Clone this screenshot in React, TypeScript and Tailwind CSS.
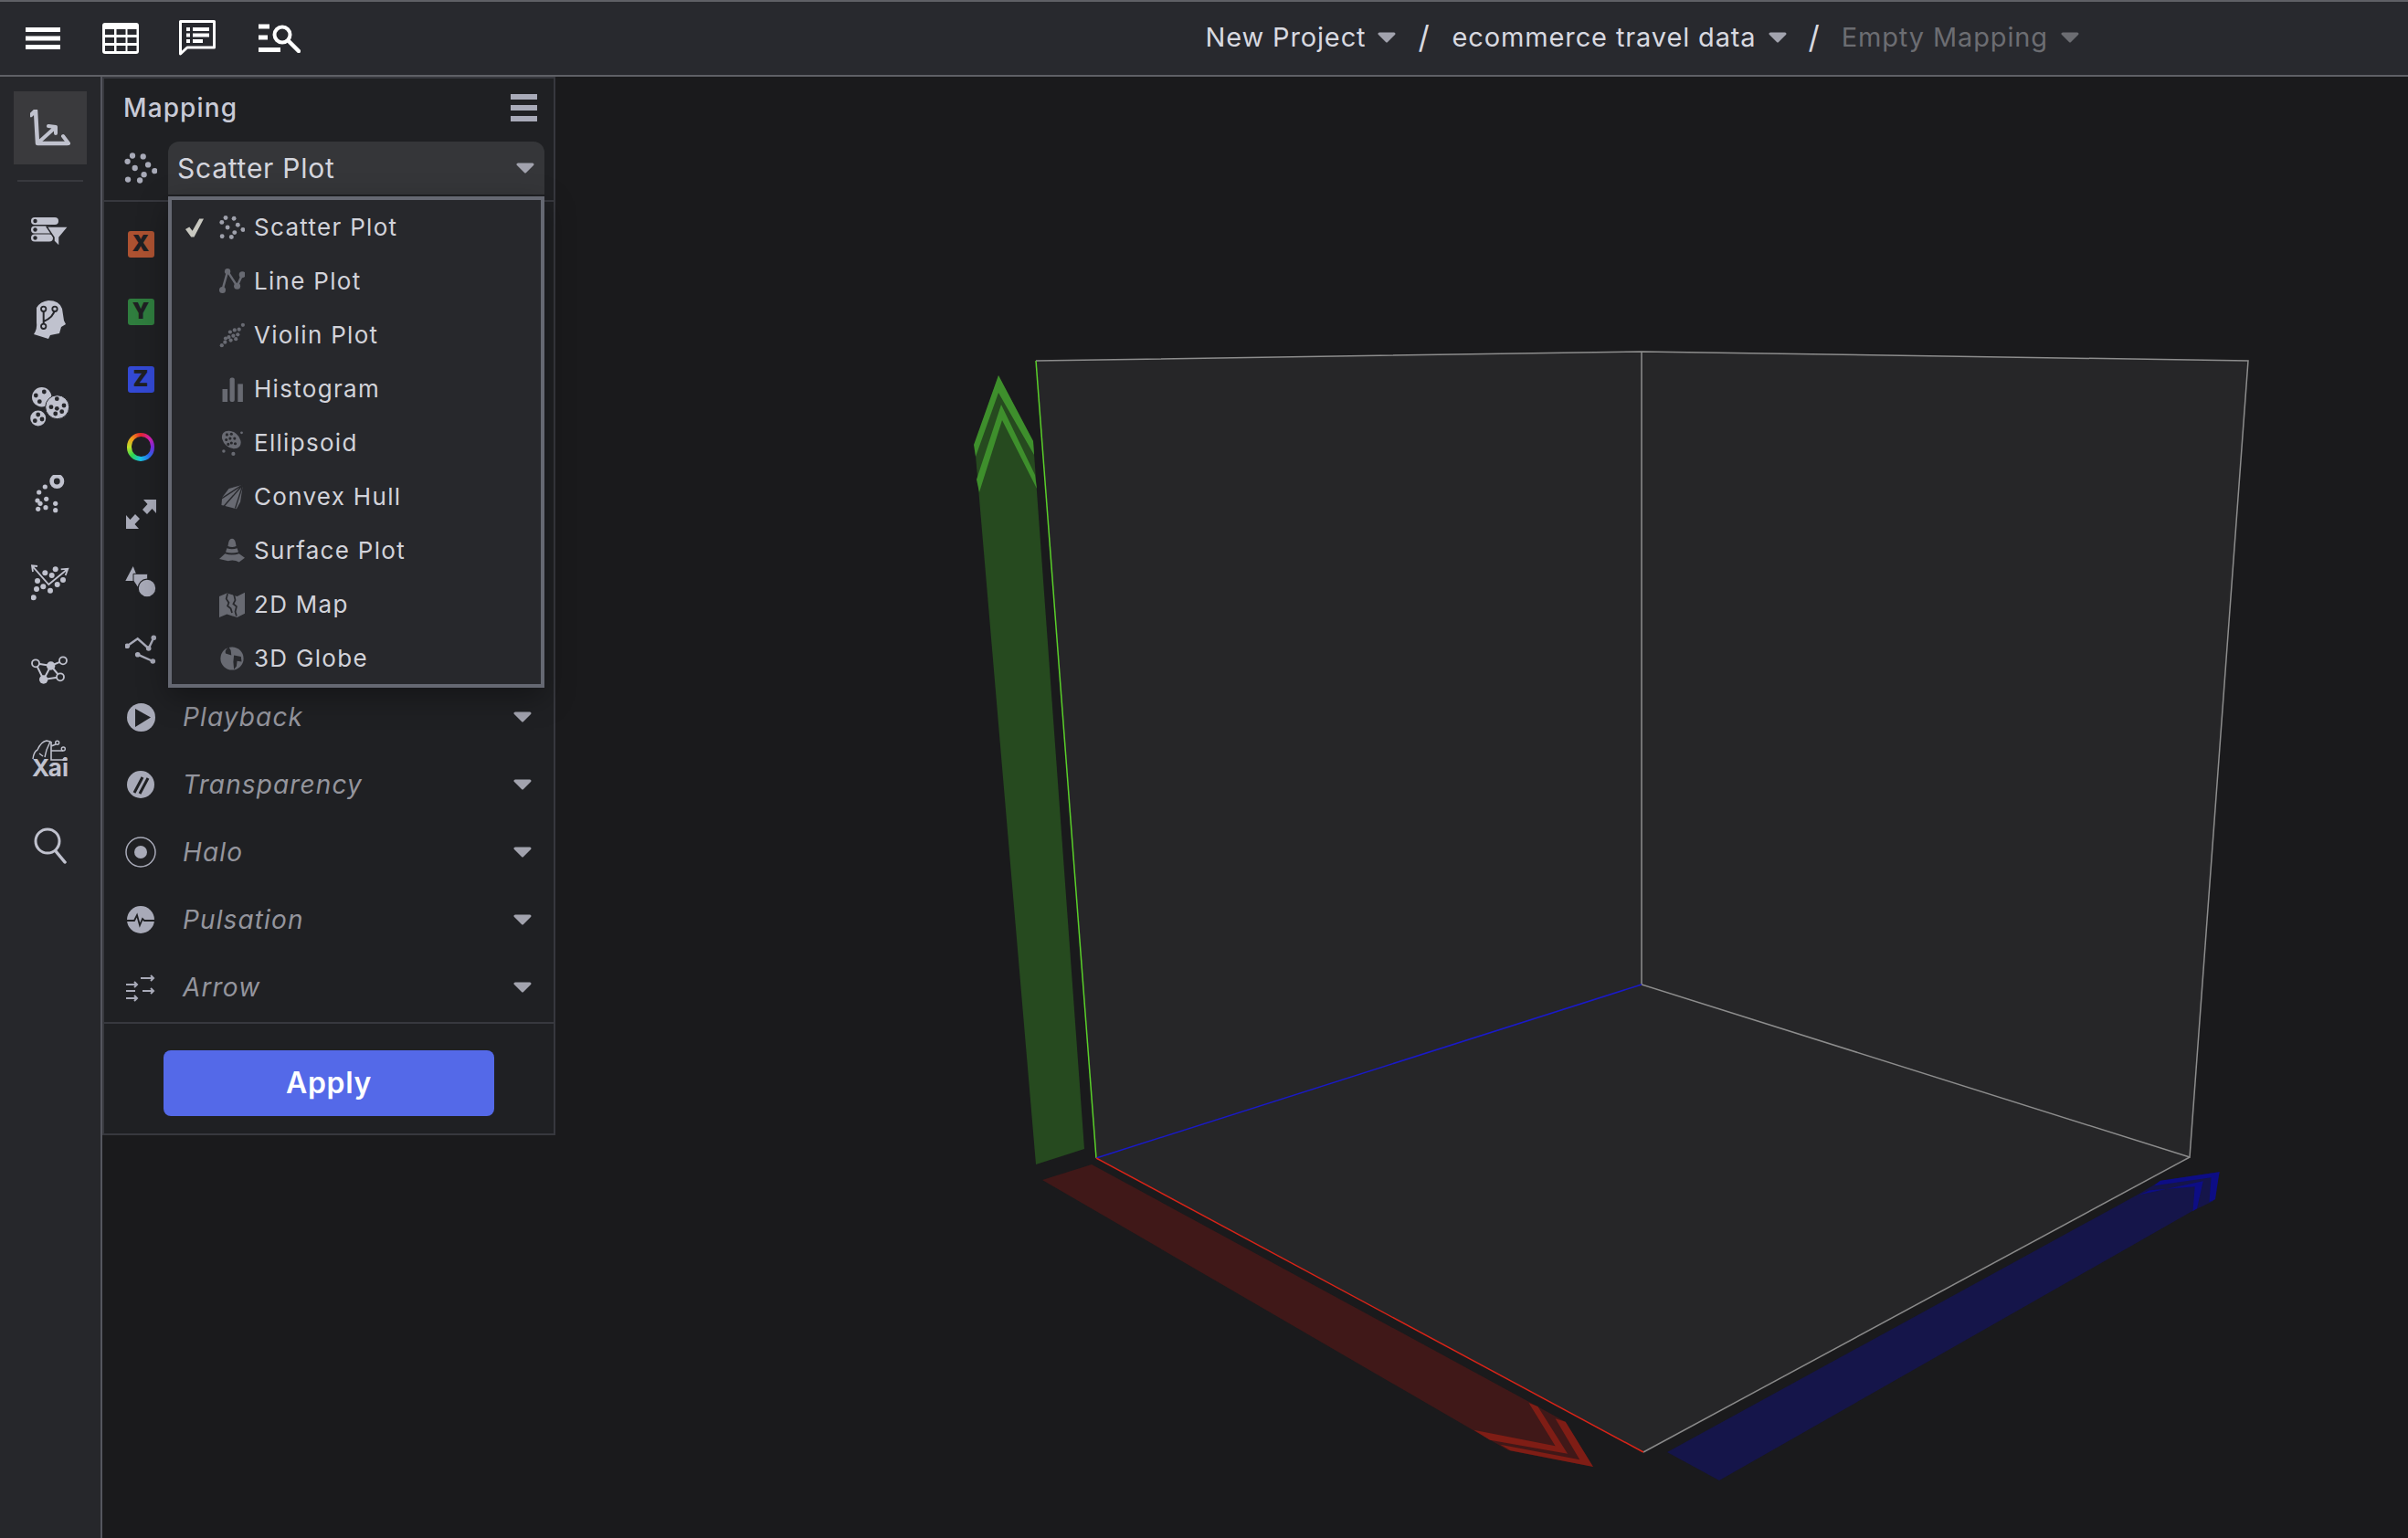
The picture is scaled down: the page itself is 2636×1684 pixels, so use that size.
import type { ReactNode } from 'react'

const font = '[font-family:Inter,"Liberation_Sans",sans-serif]'

function Caret({ className = 'fill-[#a2a3ae] stroke-[#a2a3ae]' }: { className?: string }) {
  return (
    <svg width="20" height="12" viewBox="0 0 20 12" className={className}>
      <path d="M2 2 H18 L10 10 Z" strokeWidth="3" strokeLinejoin="round" />
    </svg>
  )
}

function Dots({ pts, r = 7, className }: { pts: number[][]; r?: number; className: string }) {
  return (
    <svg viewBox="0 0 80 80" className={className}>
      {pts.map(([x, y], i) => (
        <circle key={i} cx={x} cy={y} r={r} fill="currentColor" />
      ))}
    </svg>
  )
}

const scatterPts = [[20, 10], [46, 12], [8, 24], [58, 32], [26, 40], [74, 47], [48, 56], [9, 68], [38, 70]]
const violinPts = [[74, 8], [62, 22], [48, 24], [34, 30], [58, 38], [44, 42], [30, 46], [20, 50], [52, 52], [36, 56], [18, 62], [8, 72]]

const menuIcon = 'w-[28px] h-[28px] text-[#686a72]'

function LineIcon() {
  return (
    <svg viewBox="0 0 80 80" className={menuIcon}>
      <polyline points="10,67 26,9 56,55 72,19" fill="none" stroke="currentColor" strokeWidth="7" />
      <circle cx="26" cy="9" r="9" fill="currentColor" />
      <circle cx="72" cy="19" r="10" fill="currentColor" />
      <circle cx="56" cy="55" r="10" fill="currentColor" />
      <circle cx="10" cy="67" r="10" fill="currentColor" />
    </svg>
  )
}

function HistogramIcon() {
  return (
    <svg viewBox="0 0 80 80" className={menuIcon}>
      <rect x="10" y="40" width="16" height="40" fill="currentColor" />
      <rect x="33" y="4" width="15" height="76" rx="6" fill="currentColor" />
      <rect x="58" y="24" width="16" height="56" fill="currentColor" />
    </svg>
  )
}

function EllipsoidIcon() {
  return (
    <svg viewBox="0 0 80 80" className={menuIcon}>
      <ellipse cx="38" cy="30" rx="33" ry="24" transform="rotate(40 38 30)" fill="currentColor" />
      {[[24, 14], [38, 12], [48, 26], [34, 26], [22, 30], [38, 40], [50, 42], [28, 44]].map(([x, y], i) => (
        <circle key={i} cx={x} cy={y} r="4.5" fill="#27282c" />
      ))}
      <circle cx="70" cy="8" r="4" fill="currentColor" />
      <circle cx="14" cy="66" r="5" fill="currentColor" />
      <circle cx="44" cy="74" r="6" fill="currentColor" />
    </svg>
  )
}

function HullIcon() {
  return (
    <svg viewBox="0 0 80 80" className={menuIcon}>
      <polygon points="74,2 30,14 9,42 7,66 54,78 66,56" fill="currentColor" />
      <path d="M74 2 L6 46 M74 2 L14 70 M74 2 L50 76" stroke="#27282c" strokeWidth="4" fill="none" />
    </svg>
  )
}

function SurfaceIcon() {
  return (
    <svg viewBox="0 0 80 80" className={menuIcon}>
      <path d="M27 26 Q29 2 40 2 Q51 2 53 26 Q40 31 27 26 Z" fill="currentColor" />
      <path d="M24 32 Q40 38 56 32 L60 44 Q40 50 20 44 Z" fill="currentColor" />
      <path d="M18 49 Q40 56 62 49 L80 62 L62 76 Q46 66 28 72 L0 66 Z" fill="currentColor" />
    </svg>
  )
}

function MapIcon() {
  return (
    <svg viewBox="0 0 80 80" className={menuIcon}>
      <path d="M0 14 L24 4 L56 14 L80 2 V68 L56 80 L24 70 L0 80 Z" fill="currentColor" />
      <path d="M26 6 L22 22 L30 34 L26 44 L36 52 L40 66 M46 8 L50 26 L44 38 L54 46 L50 62 L54 76" stroke="#27282c" strokeWidth="5" fill="none" />
    </svg>
  )
}

function GlobeIcon() {
  return (
    <svg viewBox="0 0 80 80" className={menuIcon}>
      <circle cx="40" cy="40" r="36" fill="currentColor" />
      <path d="M30 4 Q16 14 20 24 L38 30 L36 14 Z M46 30 L68 34 L70 50 L56 48 L54 64 L46 74 L44 50 Z" fill="#27282c" />
    </svg>
  )
}

const side = 'text-[#c0c2ce]'

function AxesIcon() {
  return (
    <svg width="44" height="40" viewBox="0 0 44 40" className={side}>
      <path d="M1 6 L6 1 L8 37 H41" fill="none" stroke="currentColor" strokeWidth="4.5" strokeLinejoin="round" strokeLinecap="round" />
      <path d="M8 37 L28 19 M20 18 L28 19 L28 26 M36 29 L42 37" fill="none" stroke="currentColor" strokeWidth="4" strokeLinecap="round" strokeLinejoin="round" />
    </svg>
  )
}

function FilterDbIcon() {
  return (
    <svg width="42" height="32" viewBox="0 0 42 32" className={side}>
      <rect x="0" y="0" width="30" height="8" rx="4" fill="currentColor" />
      <rect x="0" y="9.5" width="24" height="8" rx="4" fill="currentColor" />
      <rect x="0" y="18.5" width="24" height="8" rx="4" fill="currentColor" />
      <circle cx="4.5" cy="4" r="2.2" fill="#26272b" />
      <circle cx="4.5" cy="13.5" r="2.2" fill="#26272b" />
      <circle cx="4.5" cy="22.5" r="2.2" fill="#26272b" />
      <path d="M17 10 H41 L31 22 V32 L25 26 V22 Z" fill="currentColor" stroke="#26272b" strokeWidth="1.5" strokeLinejoin="round" />
    </svg>
  )
}

function BrainIcon() {
  return (
    <svg width="36" height="43" viewBox="-1 -1 36 43" className={side}>
      <path d="M2 7 Q6 0 15 -1 Q27 -1 30 8 L32 21 L34 25 L29 28 L27 35 L17 37 L15 41 L-1 36 Q3 30 2 23 Z" fill="currentColor" />
      <path d="M9.7 8.3 V27.3 M22 8.3 Q21 17 9.7 22" fill="none" stroke="#26272b" strokeWidth="2" />
      <circle cx="9.7" cy="8.3" r="2.7" fill="currentColor" stroke="#26272b" strokeWidth="1.8" />
      <circle cx="22" cy="8.3" r="2.7" fill="currentColor" stroke="#26272b" strokeWidth="1.8" />
      <circle cx="9.7" cy="27.3" r="2.7" fill="currentColor" stroke="#26272b" strokeWidth="1.8" />
    </svg>
  )
}

function CellsIcon() {
  return (
    <svg width="44" height="44" viewBox="0 0 44 44" className={side}>
      <circle cx="12.7" cy="10.7" r="10.7" fill="currentColor" />
      <circle cx="29.7" cy="21.7" r="13" fill="currentColor" stroke="#26272b" strokeWidth="1" />
      <circle cx="8.7" cy="34" r="8.5" fill="currentColor" />
      {[[6.3, 9], [15.3, 5], [10.3, 15.7], [29.3, 12.7], [23, 21.7], [29.3, 23.3], [37, 20], [34.7, 26.7], [27.7, 29], [8.7, 30], [5.3, 36.7], [13, 35]].map(([x, y], i) => (
        <circle key={i} cx={x} cy={y} r="2.4" fill="#26272b" />
      ))}
    </svg>
  )
}

function ClusterRingIcon() {
  return (
    <svg width="34" height="44" viewBox="0 0 34 44" className={side}>
      <circle cx="24.3" cy="7" r="5.7" fill="none" stroke="currentColor" strokeWidth="4.6" />
      {[[11.3, 13], [4.7, 19], [3, 28], [12.7, 26.3], [22.7, 31.3], [22.7, 38.7], [12, 35.7], [6, 31.3], [3.7, 37.3]].map(([x, y], i) => (
        <circle key={i} cx={x} cy={y} r="2.6" fill="currentColor" />
      ))}
    </svg>
  )
}

function ScatterLineIcon() {
  return (
    <svg width="42" height="40" viewBox="0 0 42 40" className={side}>
      <path d="M1 1.3 L19.3 22 L40.3 4.7 M32.7 5.3 L40.3 4.7 L37.7 12 M7 2 L1 1.3 L2 8" fill="none" stroke="currentColor" strokeWidth="1.8" />
      {[[15.3, 9.3], [26.7, 5.3], [22.7, 12], [7, 18], [35, 17], [28.7, 22], [6, 27], [13.3, 24.3], [21, 28.7], [2.7, 36.3]].map(([x, y], i) => (
        <circle key={i} cx={x} cy={y} r="3" fill="currentColor" />
      ))}
    </svg>
  )
}

function NetworkIcon() {
  return (
    <svg width="42" height="32" viewBox="0 0 42 32" className={side}>
      <path d="M5 8.3 L13.7 26 M5 8.3 L21.7 11 L35 5.3 M21.7 11 L32 23.3 L13.7 26 L21.7 11" fill="none" stroke="currentColor" strokeWidth="2" />
      <circle cx="5" cy="8.3" r="4" fill="#26272b" stroke="currentColor" strokeWidth="1.8" />
      <circle cx="35" cy="5.3" r="4" fill="#26272b" stroke="currentColor" strokeWidth="1.8" />
      <circle cx="32" cy="23.3" r="4" fill="#26272b" stroke="currentColor" strokeWidth="1.8" />
      <circle cx="21.7" cy="11" r="4.7" fill="currentColor" />
      <circle cx="13.7" cy="26" r="4.7" fill="currentColor" />
    </svg>
  )
}

function XaiIcon() {
  return (
    <div className="flex flex-col items-center">
      <svg width="40" height="24" viewBox="0 0 40 24" className={side}>
        <path d="M1 22 Q2 14 6 12 Q10 3 16 2 L20 3 L16 12 L14 20 M8 16 L12 19" fill="none" stroke="currentColor" strokeWidth="1.4" />
        <path d="M21 3 V23 H36 M21 13 H34 M21 8 L26 6" fill="none" stroke="currentColor" strokeWidth="1.6" />
        <circle cx="27.7" cy="4.3" r="2" fill="none" stroke="currentColor" strokeWidth="1.4" />
        <circle cx="34.3" cy="11" r="2" fill="none" stroke="currentColor" strokeWidth="1.4" />
        <circle cx="36" cy="23" r="2.6" fill="currentColor" />
      </svg>
      <span className="text-[26px] leading-[20px] font-bold text-[#c0c2ce] -mt-[2px]">Xai</span>
    </div>
  )
}

function SearchIcon() {
  return (
    <svg width="36" height="40" viewBox="0 0 36 40" className={side}>
      <circle cx="15" cy="15" r="13" fill="none" stroke="currentColor" strokeWidth="3" />
      <path d="M24 26 L34 38" stroke="currentColor" strokeWidth="3.5" strokeLinecap="round" />
    </svg>
  )
}

const rowIcon = 'text-[#a8aab8]'

function Badge({ letter, bg }: { letter: string; bg: string }) {
  return (
    <div className={`w-[29px] h-[29px] rounded-[3px] flex items-center justify-center text-[24px] font-black leading-none text-[#1f2023] ${bg}`}>
      {letter}
    </div>
  )
}

function ColorRing() {
  return (
    <div className="w-[30px] h-[31px] rounded-full flex items-center justify-center bg-[conic-gradient(#e3272d,#d81eb0,#7a2be2,#2a6af0,#19c3e6,#2dd44f,#bfe02c,#f29a1a,#e3272d)]">
      <div className="w-[21px] h-[22px] rounded-full bg-[#1f2023]" />
    </div>
  )
}

function ResizeIcon() {
  return (
    <svg width="33" height="32" viewBox="0 0 33 32" className={rowIcon}>
      <path d="M19 0 H33 V15 L28.5 10 L23 16 L18 11 L23.5 5 Z M0 17 L4.5 22 L10 16 L15 21 L9.5 27 L14 32 H0 Z" fill="currentColor" />
    </svg>
  )
}

function ShapesIcon() {
  return (
    <svg width="34" height="34" viewBox="0 0 34 34" className={rowIcon}>
      <path d="M8.7 0 L15 16 H0.3 Z" fill="currentColor" />
      <path d="M9 8.3 H24.7 V25 H15 L9 16 Z" fill="currentColor" stroke="#1f2023" strokeWidth="1" />
      <circle cx="24" cy="24" r="9.8" fill="currentColor" stroke="#1f2023" strokeWidth="1.2" />
    </svg>
  )
}

function LinesIcon() {
  return (
    <svg width="34" height="33" viewBox="0 0 34 33" className={rowIcon}>
      <path d="M2.3 12.3 L13.7 4.3 L25.7 15 L31.3 3.3 M13.7 21.7 L30.3 29" fill="none" stroke="currentColor" strokeWidth="2.4" />
      {[[2.3, 12.3], [25.7, 15], [31.3, 3.3], [13.7, 21.7], [30.3, 29]].map(([x, y], i) => (
        <circle key={i} cx={x} cy={y} r="2.8" fill="currentColor" />
      ))}
    </svg>
  )
}

function PlayIcon() {
  return (
    <svg width="31" height="31" viewBox="0 0 31 31" className={rowIcon}>
      <circle cx="15.5" cy="15.5" r="15.5" fill="currentColor" />
      <path d="M9 6 L26 15.5 L9 26 Z" fill="#1f2023" />
    </svg>
  )
}

function TransparencyIcon() {
  return (
    <svg width="30" height="30" viewBox="0 0 30 30" className={rowIcon}>
      <circle cx="15" cy="15" r="15" fill="currentColor" />
      <path d="M17 7 L8 24 M23 8 L14 25" stroke="#1f2023" strokeWidth="3" />
    </svg>
  )
}

function HaloIcon() {
  return (
    <svg width="34" height="34" viewBox="0 0 34 34" className={rowIcon}>
      <circle cx="17" cy="17" r="16" fill="none" stroke="currentColor" strokeWidth="1.5" />
      <circle cx="17" cy="17" r="7" fill="currentColor" />
    </svg>
  )
}

function PulseIcon() {
  return (
    <svg width="30" height="30" viewBox="0 0 30 30" className={rowIcon}>
      <circle cx="15" cy="15" r="15" fill="currentColor" />
      <path d="M0 16 H8 L11 10 L14 21 L17 14 L19 16 H30" fill="none" stroke="#1f2023" strokeWidth="1.8" />
    </svg>
  )
}

function ArrowsIcon() {
  return (
    <svg width="32" height="32" viewBox="0 0 32 32" className={rowIcon}>
      <path d="M16 6 H30 M27 3 L30 6 L27 9 M0 13 H12 M9 10 L12 13 L9 16 M18 20 H30 M27 17 L30 20 L27 23 M0 20 H10 M0 28 H12 M9 25 L12 28 L9 31" fill="none" stroke="currentColor" strokeWidth="2" />
    </svg>
  )
}

function Row({ icon, label }: { icon: ReactNode; label?: string }) {
  return (
    <div className="h-[74px] flex items-center">
      <div className="w-[80px] flex justify-center">{icon}</div>
      {label && (
        <>
          <span className="ml-[6px] text-[28px] italic tracking-[0.04em] text-[#94959d]">{label}</span>
          <div className="ml-auto mr-[24px]">
            <Caret />
          </div>
        </>
      )}
    </div>
  )
}

function MenuItem({ icon, label, checked }: { icon: ReactNode; label: string; checked?: boolean }) {
  return (
    <div className="h-[59px] flex items-center pl-[15px]">
      <div className="w-[20px] flex justify-center">
        {checked && (
          <svg width="21" height="22" viewBox="0 0 21 22">
            <path d="M0 13 L4.5 10.5 L8 15 L16 1 L21 1 L10 22 L6.5 22 Z" fill="#c8c8c0" />
          </svg>
        )}
      </div>
      <div className="ml-[17px] w-[28px] flex justify-center">{icon}</div>
      <span className="ml-[10px] text-[26px] tracking-[0.05em] text-[#d2d3da]">{label}</span>
    </div>
  )
}

function Scene() {
  return (
    <svg className="absolute inset-0" width="2524" height="1600" viewBox="112 84 2524 1600">
      <polygon points="1134,395 1797,385 1797,1078 1200,1268" fill="#262628" />
      <polygon points="1797,385 2461,395 2397,1267 1797,1078" fill="#262628" />
      <polygon points="1200,1268 1797,1078 2397,1267 1799,1590" fill="#262628" />

      <polygon points="1093,411 1131,483 1187,1258 1134,1275 1067,487" fill="#264a1f" />
      <polygon points="1093,411 1131,483 1132,498 1093,430 1068,500 1066,487" fill="#3e8f2c" />
      <polygon points="1096,443 1133,520 1135,535 1097,460 1072,539 1069,525" fill="#3e8f2c" />

      <polygon points="1195,1275 1141,1292 1611,1565 1651,1588 1744,1606 1714,1557 1674,1535" fill="#401818" />
      <polygon points="1673.5,1536 1702.6,1583.3 1613.3,1565.7 1631,1576.7 1716,1591.7 1683.4,1540" fill="#7f1d15" />
      <polygon points="1702.6,1553.3 1729.3,1598.3 1642.3,1581.7 1653.4,1588.3 1744,1606 1713.7,1556.7" fill="#7f1d15" />

      <polygon points="1825,1590 1882,1621 2400,1326 2423,1315 2430,1283 2365,1293 2342,1307" fill="#15154a" />
      <polygon points="2341.6,1308.3 2411.7,1293.3 2405,1323.3 2400.5,1326 2402.7,1299.3 2353.6,1303.3" fill="#0d0d85" />
      <polygon points="2358,1298.3 2364.8,1292.7 2429.5,1283.3 2425,1313.3 2418.4,1316 2420.6,1289.3" fill="#0d0d85" />

      <g fill="none" strokeWidth="1.5">
        <path d="M1134 395 L1797 385 L2461 395 L2397 1267 L1797 1078 V385" stroke="#8d8d8d" />
        <path d="M2397 1267 L1799 1590" stroke="#8a8a8a" />
        <path d="M1134 395 L1200 1268" stroke="#5ad02a" />
        <path d="M1200 1268 L1797 1078" stroke="#1a1ac8" />
        <path d="M1200 1268 L1799 1590" stroke="#d82418" />
      </g>
    </svg>
  )
}

export default function App() {
  return (
    <div className={`${font} w-screen h-screen overflow-hidden bg-[#1a1a1c] flex flex-col`}>
      <header className="h-[84px] shrink-0 bg-[#28292e] border-t-2 border-b-2 border-t-[#5f6066] border-b-[#5f6066] flex items-center pl-[28px]">
        <svg width="38" height="24" viewBox="0 0 38 24" className="text-white">
          <path d="M0 2.5 H38 M0 12 H38 M0 21.5 H38" stroke="currentColor" strokeWidth="5" />
        </svg>
        <svg width="40" height="34" viewBox="0 0 40 34" className="ml-[46px]">
          <rect width="40" height="34" rx="3" fill="#fff" />
          {[7, 16, 25].map((y) =>
            [3, 15.5, 27.5].map((x) => <rect key={x + '-' + y} x={x} y={y} width="10" height="6" fill="#28292e" />),
          )}
        </svg>
        <svg width="40" height="40" viewBox="0 0 40 40" className="ml-[44px]">
          <path d="M1.5 1.5 H38.5 V30 H9 L1.5 37 Z" fill="none" stroke="#fff" strokeWidth="3" strokeLinejoin="round" />
          <path d="M8 8 H12 V12 H8 Z M15 8 H33 V12 H15 Z M8 14.5 H12 V18.5 H8 Z M15 14.5 H33 V18.5 H15 Z M8 21 H12 V25 H8 Z M15 21 H26 V25 H15 Z" fill="#fff" />
        </svg>
        <svg width="46" height="32" viewBox="0 0 46 32" className="ml-[47px]">
          <path d="M0 3 H12 M0 15 H10 M0 28.5 H24" stroke="#fff" strokeWidth="5" />
          <circle cx="26" cy="12" r="8.5" fill="none" stroke="#fff" strokeWidth="4" />
          <path d="M33 19 L44 30" stroke="#fff" strokeWidth="4.5" strokeLinecap="round" />
        </svg>

        <nav className="ml-auto mr-[360px] mb-[3px] flex items-center text-[29px] tracking-[0.03em] text-[#d8d9e0]">
          <span>New Project</span>
          <div className="ml-[13px]"><Caret /></div>
          <span className="ml-[24px] text-[34px] leading-none">/</span>
          <span className="ml-[24px]">ecommerce travel data</span>
          <div className="ml-[13px]"><Caret /></div>
          <span className="ml-[24px] text-[34px] leading-none">/</span>
          <span className="ml-[23px] text-[#6c6d72]">Empty Mapping</span>
          <div className="ml-[14px]"><Caret className="fill-[#6c6d72] stroke-[#6c6d72]" /></div>
        </nav>
      </header>

      <div className="flex flex-1 min-h-0">
        <aside className="w-[112px] shrink-0 bg-[#26272b] border-r-2 border-r-[#55565e] flex flex-col items-center pt-[16px]">
          <div className="w-[80px] h-[80px] bg-[#3a3a3d] flex items-center justify-center">
            <AxesIcon />
          </div>
          <div className="w-[72px] h-[2px] mt-[17px] mb-[7px] bg-[#38393e]" />
          {[<FilterDbIcon key="a" />, <BrainIcon key="b" />, <CellsIcon key="c" />, <ClusterRingIcon key="d" />, <ScatterLineIcon key="e" />, <NetworkIcon key="f" />, <XaiIcon key="g" />, <SearchIcon key="h" />].map((icon, i) => (
            <div key={i} className="h-[96px] flex items-center justify-center">
              {icon}
            </div>
          ))}
        </aside>

        <main className="relative flex-1">
          <Scene />
          <section className="relative w-[496px] h-[1159px] bg-[#1f2023] border-2 border-[#37383e] flex flex-col">
            <div className="h-[69px] shrink-0 flex items-center pl-[21px] pr-[18px] pb-[5px]">
              <span className="text-[28px] font-medium tracking-[0.04em] text-[#c8cad6]">Mapping</span>
              <div className="ml-auto w-[29px] flex flex-col gap-[6px]">
                <div className="h-[6px] bg-[#a8aab8]" />
                <div className="h-[6px] bg-[#a8aab8]" />
                <div className="h-[6px] bg-[#a8aab8]" />
              </div>
            </div>
            <div className="h-[66px] shrink-0 border-b-2 border-b-[#37383e] flex items-start pl-[22px] pr-[10px]">
              <div className="w-[36px] h-[58px] flex items-center">
                <Dots pts={scatterPts} className="w-[36px] h-[42px] text-[#a8aab8]" />
              </div>
              <div className="ml-[12px] flex-1 h-[58px] bg-[#353639] rounded-t-[12px] flex items-center pl-[10px] pr-[11px]">
                <span className="text-[30px] tracking-[0.025em] text-[#d4d5dd]">Scatter Plot</span>
                <div className="ml-auto"><Caret /></div>
              </div>
            </div>

            <div className="h-[897px] shrink-0 pt-[9px]">
              <Row icon={<Badge letter="X" bg="bg-[#ad5231]" />} />
              <Row icon={<Badge letter="Y" bg="bg-[#2f7d3e]" />} />
              <Row icon={<Badge letter="Z" bg="bg-[#3349d4]" />} />
              <Row icon={<ColorRing />} />
              <Row icon={<ResizeIcon />} />
              <Row icon={<ShapesIcon />} />
              <Row icon={<LinesIcon />} />
              <Row icon={<PlayIcon />} label="Playback" />
              <Row icon={<TransparencyIcon />} label="Transparency" />
              <Row icon={<HaloIcon />} label="Halo" />
              <Row icon={<PulseIcon />} label="Pulsation" />
              <Row icon={<ArrowsIcon />} label="Arrow" />
            </div>

            <div className="mt-[1px] border-t-2 border-t-[#37383e] flex-1 flex items-start justify-center pt-[29px]">
              <button className="w-[362px] h-[72px] rounded-[8px] bg-[#5469e8] text-white text-[32px] font-semibold tracking-[0.02em]">
                Apply
              </button>
            </div>

            <div className="absolute left-[70px] top-[129px] w-[412px] h-[538px] bg-[#27282c] border-4 border-[#656872] shadow-[0_10px_30px_rgba(0,0,0,0.35)]">
              <MenuItem checked label="Scatter Plot" icon={<Dots pts={scatterPts} className="w-[28px] h-[28px] text-[#9fa1ac]" />} />
              <MenuItem label="Line Plot" icon={<LineIcon />} />
              <MenuItem label="Violin Plot" icon={<Dots pts={violinPts} r={6} className={menuIcon} />} />
              <MenuItem label="Histogram" icon={<HistogramIcon />} />
              <MenuItem label="Ellipsoid" icon={<EllipsoidIcon />} />
              <MenuItem label="Convex Hull" icon={<HullIcon />} />
              <MenuItem label="Surface Plot" icon={<SurfaceIcon />} />
              <MenuItem label="2D Map" icon={<MapIcon />} />
              <MenuItem label="3D Globe" icon={<GlobeIcon />} />
            </div>
          </section>
        </main>
      </div>
    </div>
  )
}
